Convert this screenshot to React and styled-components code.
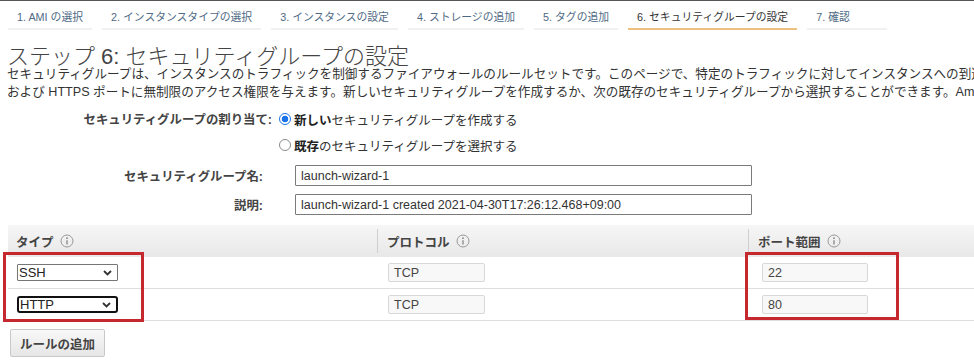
import React from "react";
import styled, { createGlobalStyle } from "styled-components";

const GlobalStyle = createGlobalStyle`
  html, body {
    margin: 0;
    padding: 0;
    background: #fff;
    overflow: hidden;
  }
  body {
    font-family: "Liberation Sans", "Noto Sans CJK JP", sans-serif;
    color: #333;
  }
`;

const Page = styled.div`
  width: 974px;
  height: 360px;
  overflow: hidden;
  border-top: 1px solid #555;
  box-sizing: border-box;
`;

const Tabs = styled.nav`
  display: flex;
  gap: 10px;
  padding: 3px 0 0 8px;
`;

const Tab = styled.div`
  height: 26px;
  min-width: 80px;
  padding: 0 9px;
  box-sizing: border-box;
  display: flex;
  align-items: center;
  font-size: 10.8px;
  white-space: nowrap;
  color: ${(p) => (p.$active ? "#333" : "#4f6a84")};
  border-bottom: 2px solid ${(p) => (p.$active ? "#ecc07f" : "#f1f1f1")};
`;

const Title = styled.h1`
  margin: 16px 0 0 7px;
  font-size: 22px;
  line-height: 22px;
  font-weight: 300;
  color: #444;
  white-space: nowrap;
`;

const Description = styled.div`
  margin: -3px 0 0 7px;
  font-size: 12.6px;
  line-height: 18px;
  color: #333;
`;

const DescLine = styled.div`
  white-space: nowrap;
`;

const Form = styled.div`
  display: flex;
  flex-direction: column;
  margin-top: 8px;
`;

const FormRow = styled.div`
  display: flex;
  align-items: center;
  height: ${(p) => p.$height || 20}px;
  margin-top: ${(p) => p.$top || 0}px;
  gap: ${(p) => p.$gap}px;
`;

const Label = styled.div`
  width: ${(p) => p.$width}px;
  flex: none;
  text-align: right;
  font-size: 12.4px;
  font-weight: bold;
  color: #444;
  white-space: nowrap;
`;

const RadioOption = styled.label`
  display: flex;
  align-items: center;
  gap: 3px;
  font-size: 12.5px;
  color: #333;
  white-space: nowrap;
  b {
    color: #222;
  }
`;

const RadioMark = styled.span`
  width: 12px;
  height: 12px;
  box-sizing: border-box;
  border-radius: 50%;
  border: 1px solid ${(p) => (p.$checked ? "#1a73e8" : "#8a8a8a")};
  background: ${(p) =>
    p.$checked ? "radial-gradient(circle, #1a73e8 0 3.2px, #fff 3.6px)" : "#fff"};
`;

const TextBox = styled.div`
  width: 457px;
  height: 21px;
  box-sizing: border-box;
  border: 1px solid #7a7a7a;
  border-radius: 1px;
  padding: 0 5px;
  display: flex;
  align-items: center;
  font-size: 12.5px;
  color: #333;
  white-space: nowrap;
`;

const Table = styled.div`
  position: relative;
  margin: 10px 0 0 8px;
`;

const HeaderRow = styled.div`
  display: grid;
  grid-template-columns: 369px 371px 1fr;
  height: 32px;
  background: linear-gradient(#f6f6f6, #e8e8e8);
`;

const HeaderCell = styled.div`
  display: flex;
  align-items: center;
  gap: 6px;
  margin: 4px 0;
  padding-left: ${(p) => p.$indent}px;
  border-left: ${(p) => (p.$divider ? "1px solid #cfcfcf" : "none")};
  font-size: 12.5px;
  font-weight: bold;
  color: #444;
`;

const BodyRow = styled.div`
  display: grid;
  grid-template-columns: 369px 371px 1fr;
  height: 32px;
  box-sizing: border-box;
  border-bottom: 1px solid #dedede;
`;

const BodyCell = styled.div`
  display: flex;
  align-items: center;
  padding-left: ${(p) => p.$indent}px;
`;

const SelectBox = styled.div`
  width: 101px;
  height: 17px;
  box-sizing: border-box;
  display: flex;
  align-items: center;
  justify-content: space-between;
  padding: 0 5px 0 1px;
  font-size: 13px;
  color: #222;
  border: ${(p) => (p.$focused ? "2px solid #111" : "1px solid #767676")};
  border-radius: ${(p) => (p.$focused ? 3 : 1)}px;
`;

const ReadOnlyBox = styled.div`
  width: ${(p) => p.$width}px;
  height: 19px;
  box-sizing: border-box;
  display: flex;
  align-items: center;
  padding-left: 5px;
  font-size: 12.5px;
  color: #444;
  background: #f8f8f8;
  border: 1px solid #d8d8d8;
  border-radius: 2px;
`;

const Highlight = styled.div`
  position: absolute;
  left: ${(p) => p.$left}px;
  top: ${(p) => p.$top}px;
  width: ${(p) => p.$width}px;
  height: ${(p) => p.$height}px;
  box-sizing: border-box;
  border: 3px solid #c5282f;
  pointer-events: none;
`;

const AddButton = styled.button`
  margin: 8px 0 0 10px;
  height: 28px;
  padding: 0 9px;
  font-family: inherit;
  font-size: 12.5px;
  font-weight: bold;
  color: #444;
  background: linear-gradient(#f8f8f8, #e6e6e6);
  border: 1px solid #c8c8c8;
  border-radius: 2px;
`;

const InfoIcon = () => (
  <svg width="14" height="14" viewBox="0 0 14 14">
    <circle cx="7" cy="7" r="6" fill="none" stroke="#999" strokeWidth="1" />
    <circle cx="7" cy="4.2" r="0.9" fill="#888" />
    <path d="M7 6.2 V10.4" stroke="#888" strokeWidth="1.3" />
  </svg>
);

const Chevron = () => (
  <svg width="9" height="6" viewBox="0 0 9 6">
    <path d="M1 1 L4.5 4.5 L8 1" fill="none" stroke="#333" strokeWidth="1.8" />
  </svg>
);

const steps = [
  "1. AMI の選択",
  "2. インスタンスタイプの選択",
  "3. インスタンスの設定",
  "4. ストレージの追加",
  "5. タグの追加",
  "6. セキュリティグループの設定",
  "7. 確認",
];

const rules = [
  { type: "SSH", protocol: "TCP", port: "22" },
  { type: "HTTP", protocol: "TCP", port: "80", focused: true },
];

const App = () => {
  return (
    <Page>
      <GlobalStyle />
      <Tabs>
        {steps.map((s, i) => (
          <Tab key={s} $active={i === 5}>
            {s}
          </Tab>
        ))}
      </Tabs>

      <Title>ステップ 6: セキュリティグループの設定</Title>
      <Description>
        <DescLine>
          セキュリティグループは、インスタンスのトラフィックを制御するファイアウォールのルールセットです。このページで、特定のトラフィックに対してインスタンスへの到達を許可するルールを追加できます。たとえば、ウェブサーバーをセットアップして、インターネットトラフィックがインスタンスに到達することを許可する場合、HTTP
        </DescLine>
        <DescLine>
          および HTTPS ポートに無制限のアクセス権限を与えます。新しいセキュリティグループを作成するか、次の既存のセキュリティグループから選択することができます。Amazon EC2 セキュリティグループの詳細。
        </DescLine>
      </Description>

      <Form>
        <FormRow $gap={7}>
          <Label $width={272}>セキュリティグループの割り当て:</Label>
          <RadioOption>
            <RadioMark $checked />
            <span>
              <b>新しい</b>セキュリティグループを作成する
            </span>
          </RadioOption>
        </FormRow>
        <FormRow $gap={7} $top={6}>
          <Label $width={272} />
          <RadioOption>
            <RadioMark />
            <span>
              <b>既存</b>のセキュリティグループを選択する
            </span>
          </RadioOption>
        </FormRow>
        <FormRow $gap={32} $top={10} $height={21}>
          <Label $width={263}>セキュリティグループ名:</Label>
          <TextBox>launch-wizard-1</TextBox>
        </FormRow>
        <FormRow $gap={32} $top={8} $height={21}>
          <Label $width={263}>説明:</Label>
          <TextBox>launch-wizard-1 created 2021-04-30T17:26:12.468+09:00</TextBox>
        </FormRow>
      </Form>

      <Table>
        <HeaderRow>
          <HeaderCell $indent={8}>
            タイプ <InfoIcon />
          </HeaderCell>
          <HeaderCell $indent={9} $divider>
            プロトコル <InfoIcon />
          </HeaderCell>
          <HeaderCell $indent={9} $divider>
            ポート範囲 <InfoIcon />
          </HeaderCell>
        </HeaderRow>
        {rules.map((r) => (
          <BodyRow key={r.type}>
            <BodyCell $indent={9}>
              <SelectBox $focused={r.focused}>
                {r.type}
                <Chevron />
              </SelectBox>
            </BodyCell>
            <BodyCell $indent={11}>
              <ReadOnlyBox $width={97}>{r.protocol}</ReadOnlyBox>
            </BodyCell>
            <BodyCell $indent={14}>
              <ReadOnlyBox $width={106}>{r.port}</ReadOnlyBox>
            </BodyCell>
          </BodyRow>
        ))}
        <Highlight $left={-5} $top={27} $width={141} $height={70} />
        <Highlight $left={737} $top={27} $width={154} $height={68} />
      </Table>

      <AddButton>ルールの追加</AddButton>
    </Page>
  );
};

export default App;
